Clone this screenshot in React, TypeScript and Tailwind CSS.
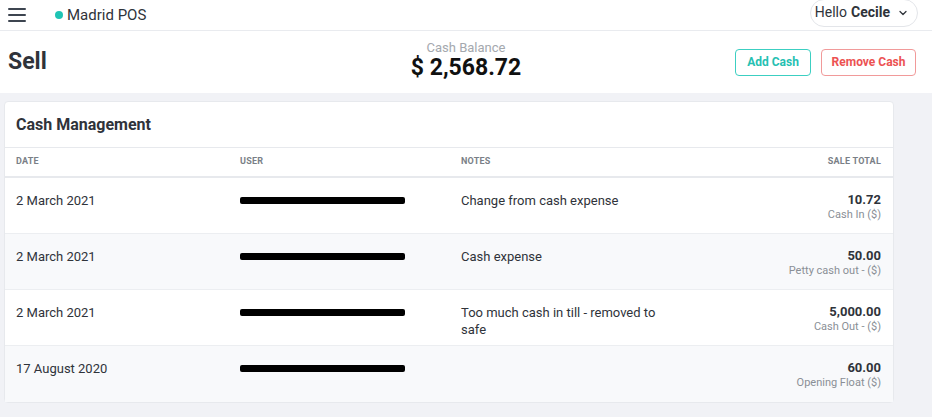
import { ChevronDown } from "lucide-react";

type CashEntry = {
	date: string;
	note: string;
	amount: string;
	kind: string;
};

const entries: CashEntry[] = [
	{ date: "2 March 2021", note: "Change from cash expense", amount: "10.72", kind: "Cash In ($)" },
	{ date: "2 March 2021", note: "Cash expense", amount: "50.00", kind: "Petty cash out - ($)" },
	{
		date: "2 March 2021",
		note: "Too much cash in till - removed to safe",
		amount: "5,000.00",
		kind: "Cash Out - ($)",
	},
	{ date: "17 August 2020", note: "", amount: "60.00", kind: "Opening Float ($)" },
];

function TopBar() {
	return (
		<div className="flex h-[31px] items-center justify-between border-b border-[#e9ebef] bg-white pl-2 pr-[14px]">
			<div className="flex items-center">
				<button className="flex w-[18px] flex-col gap-[4px]">
					<span className="h-[2px] w-full rounded bg-[#3d4550]" />
					<span className="h-[2px] w-full rounded bg-[#3d4550]" />
					<span className="h-[2px] w-full rounded bg-[#3d4550]" />
				</button>
				<span className="ml-[29px] h-[8px] w-[8px] rounded-full bg-[#1fc4b4]" />
				<span className="ml-[4px] text-[15px] text-[#2f333a]">Madrid POS</span>
			</div>
			<button className="-mt-[5px] flex h-[28px] items-center rounded-full border border-[#e3e5e9] pr-[8px] pl-[4px] text-[14px] text-[#2f333a]">
				Hello <b className="ml-[4px] font-bold">Cecile</b>
				<ChevronDown className="ml-[7px] h-[12px] w-[12px]" strokeWidth={2.5} />
			</button>
		</div>
	);
}

function SellHeader() {
	return (
		<div className="grid h-[62px] grid-cols-[1fr_auto_1fr] items-center bg-white px-2">
			<h1 className="text-[23px] font-bold text-[#2f333a]">Sell</h1>
			<div className="-mt-[3px] flex flex-col items-center">
				<span className="text-[13px] leading-[15px] text-[#a4a8ae]">Cash Balance</span>
				<span className="text-[23px] leading-[26px] font-bold text-[#111]">$ 2,568.72</span>
			</div>
			<div className="flex justify-end gap-[10px] pr-[8px]">
				<button className="h-[27px] w-[76px] rounded border border-[#3ccfc2] bg-white text-[12px] font-bold text-[#25c0b2]">
					Add Cash
				</button>
				<button className="h-[27px] w-[95px] rounded border border-[#f19a9a] bg-white text-[12px] font-bold text-[#ec5252]">
					Remove Cash
				</button>
			</div>
		</div>
	);
}

// email addresses are blacked out in this view
function Redacted() {
	return <div className="h-[7px] w-[165px] rounded-[2px] bg-black" />;
}

function CashTable() {
	return (
		<div className="w-[890px] rounded border border-[#e7e9ed] bg-white">
			<div className="flex h-[46px] items-center border-b border-[#e7e9ed] px-[11px]">
				<h2 className="text-[16px] font-bold text-[#2f333a]">Cash Management</h2>
			</div>
			<div className="grid h-[30px] grid-cols-[224px_221px_1fr_200px] items-center border-b-2 border-[#e7e9ed] pr-[12px] pl-[11px] text-[9px] font-bold tracking-wide text-[#7a7f87]">
				<span>DATE</span>
				<span>USER</span>
				<span>NOTES</span>
				<span className="text-right">SALE TOTAL</span>
			</div>
			{entries.map((entry, i) => (
				<div
					key={i}
					className={`grid h-[56px] grid-cols-[224px_221px_1fr_200px] items-start border-b border-[#eceef1] pr-[12px] pl-[11px] pt-[13px] text-[13px] leading-[17px] text-[#2f333a] last:border-b-0 ${
						i % 2 === 1 ? "bg-[#f8f9fb]" : "bg-white"
					}`}
				>
					<span className="pt-[1px]">{entry.date}</span>
					<div className="pt-[6px]">
						<Redacted />
					</div>
					<span className="w-[200px] pt-[1px]">{entry.note}</span>
					<div className="flex flex-col items-end">
						<span className="text-[13px] leading-[17px] font-bold">{entry.amount}</span>
						<span className="text-[11px] leading-[13px] text-[#8a8f96]">{entry.kind}</span>
					</div>
				</div>
			))}
		</div>
	);
}

export default function App() {
	return (
		<div className="min-h-[417px] bg-[#f1f2f6] font-['Roboto',sans-serif]">
			<TopBar />
			<SellHeader />
			<div className="px-[4px] pt-[8px] pb-4">
				<CashTable />
			</div>
		</div>
	);
}
